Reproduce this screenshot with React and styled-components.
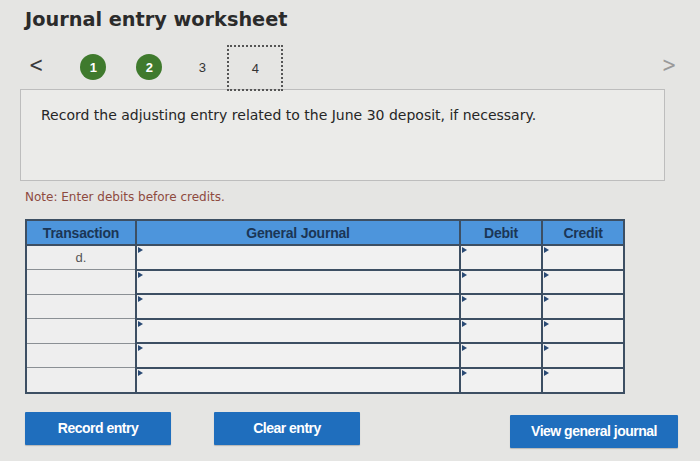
import React from 'react';
import styled, {createGlobalStyle} from 'styled-components';

const GlobalStyle = createGlobalStyle`
  body {
    margin: 0;
    background: #e5e5e3;
    font-family: "DejaVu Sans", Verdana, sans-serif;
  }
`

const columns = [
  {key: 'transaction', label: 'Transaction', width: 110},
  {key: 'journal', label: 'General Journal', width: 324},
  {key: 'debit', label: 'Debit', width: 82},
  {key: 'credit', label: 'Credit', width: 82},
]

const rows = ['d.', '', '', '', '', '']

const App = () => {
  return (
    <Page>
      <GlobalStyle />
      <Title>Journal entry worksheet</Title>

      <Nav>
        <Steps>
          <Arrow>&lt;</Arrow>
          <Step done>1</Step>
          <Step done>2</Step>
          <Step>3</Step>
          <Step current>4</Step>
        </Steps>
        <Arrow disabled>&gt;</Arrow>
      </Nav>

      <Instruction>
        Record the adjusting entry related to the June 30 deposit, if necessary.
      </Instruction>

      <Note>Note: Enter debits before credits.</Note>

      <Table>
        <colgroup>
          {columns.map(c => <col key={c.key} style={{width: c.width}} />)}
        </colgroup>
        <thead>
          <tr>
            {columns.map(c => <Th key={c.key}>{c.label}</Th>)}
          </tr>
        </thead>
        <tbody>
          {rows.map((label, i) => (
            <tr key={i}>
              <LabelCell>{label}</LabelCell>
              <InputCell />
              <InputCell />
              <InputCell />
            </tr>
          ))}
        </tbody>
      </Table>

      <Actions>
        <Group>
          <Button>Record entry</Button>
          <Button>Clear entry</Button>
        </Group>
        <Button wide>View general journal</Button>
      </Actions>
    </Page>
  );
}

const Page = styled.div`
  width: 700px;
  height: 461px;
  box-sizing: border-box;
  padding: 8px 22px 0 20px;
  overflow: hidden;
`

const Title = styled.h1`
  margin: 0 0 0 5px;
  font-size: 19.3px;
  line-height: 24px;
  font-weight: bold;
  color: #2b2b2b;
`

const Nav = styled.div`
  margin-top: 12px;
  height: 48px;
  display: flex;
  align-items: center;
  justify-content: space-between;
  padding-left: 7px;
`

const Steps = styled.div`
  display: flex;
  align-items: center;
`

const Arrow = styled.span`
  font-family: "DejaVu Sans", sans-serif;
  font-size: 22px;
  line-height: 1;
  margin-right: ${p => (p.disabled ? '0' : '35px')};
  margin-top: -6px;
  color: ${p => (p.disabled ? '#9a9a9a' : '#3a3a3a')};
  transform: scaleX(0.8);
`

const Step = styled.span`
  display: flex;
  align-items: center;
  justify-content: center;
  box-sizing: border-box;
  width: ${p => (p.current ? '56px' : '26px')};
  height: ${p => (p.current ? '46px' : '26px')};
  margin-right: ${p => (p.current ? '0' : p.done ? '30px' : '12px')};
  margin-left: ${p => (!p.done && !p.current ? '-3px' : '0')};
  margin-top: ${p => (p.current ? '0' : '-2px')};
  border-radius: ${p => (p.done ? '50%' : '0')};
  background: ${p => (p.done ? '#3f7a2d' : 'transparent')};
  border: ${p => (p.current ? '2px dotted #555' : 'none')};
  color: ${p => (p.done ? '#fff' : '#333')};
  font-family: "Liberation Sans", Arial, sans-serif;
  font-size: 13px;
  font-weight: ${p => (p.done ? 'bold' : 'normal')};
`

const Instruction = styled.div`
  margin-top: -3px;
  height: 92px;
  box-sizing: border-box;
  width: 645px;
  border: 1px solid #bdbdbd;
  background: #ebebe9;
  padding: 17px 20px;
  font-size: 14px;
  line-height: 16px;
  color: #262626;
`

const Note = styled.p`
  margin: 9px 0 0 5px;
  font-size: 12px;
  line-height: 14px;
  color: #8e4a3f;
`

const Table = styled.table`
  margin: 15px 0 0 5px;
  width: 598px;
  border-collapse: collapse;
  table-layout: fixed;
  background: #eeeeee;
  border: 2px solid #3d4f63;
  font-family: "Liberation Sans", Arial, sans-serif;
`

const Th = styled.th`
  height: 23px;
  padding: 0;
  background: #4d95dc;
  color: #1b3656;
  font-size: 14px;
  font-weight: bold;
  border-right: 2px solid #3d4f63;
  border-bottom: 2px solid #3d4f63;
  letter-spacing: -0.2px;
`

const LabelCell = styled.td`
  height: 22.6px;
  padding: 0;
  text-align: center;
  font-size: 13px;
  color: #555;
  border-top: 1px solid #8a8f94;
  border-right: 2px solid #3d4f63;
`

const InputCell = styled.td`
  position: relative;
  height: 22.6px;
  padding: 0;
  background: #f1f1f1;
  border: 2px solid #3d4f63;

  &::before {
    content: '';
    position: absolute;
    left: 1px;
    top: 1px;
    border-top: 3px solid transparent;
    border-bottom: 3px solid transparent;
    border-left: 5px solid #2a4a74;
  }
`

const Actions = styled.div`
  margin: 18px 0 0 5px;
  display: flex;
  justify-content: space-between;
  align-items: flex-start;
`

const Group = styled.div`
  display: flex;
  gap: 43px;
`

const Button = styled.button`
  width: ${p => (p.wide ? '168px' : '146px')};
  height: 33px;
  margin-top: ${p => (p.wide ? '3px' : '0')};
  border: none;
  border-radius: 1px;
  background: #1f6ebd;
  color: #fff;
  font-family: "Liberation Sans", Arial, sans-serif;
  font-size: 14px;
  font-weight: bold;
  letter-spacing: -0.5px;
  box-shadow: 0 1px 1px rgba(0, 0, 0, 0.2);
`

export default App;
